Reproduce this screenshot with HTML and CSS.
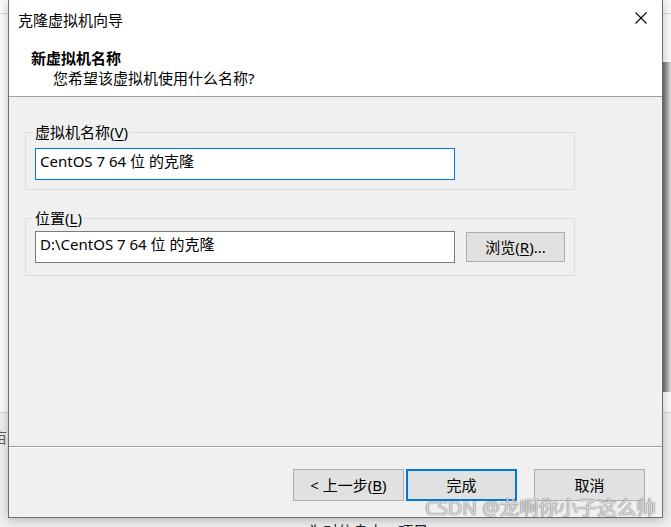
FILE: index.html
```html
<!DOCTYPE html>
<html lang="zh-CN">
<head>
<meta charset="utf-8">
<title>克隆虚拟机向导</title>
<link rel="stylesheet" href="styles.css">
</head>
<body>
<div class="desktop">
  <div class="bg-line bg-line-top"></div>
  <div class="bg-line bg-line-mid"></div>
  <div class="bg-shadow-right"></div>
  <span class="bg-char">亩</span>
  <div class="bg-text">一&nbsp;&nbsp;&nbsp;一&nbsp;&nbsp;&nbsp;为对信息中一项目</div>

  <div class="dialog">
    <div class="titlebar">
      <span class="title">克隆虚拟机向导</span>
      <svg class="close" width="12" height="12" viewBox="0 0 12 12"><path d="M0.5 0.5 L11.5 11.5 M11.5 0.5 L0.5 11.5" stroke="#000" stroke-width="1.1" fill="none"/></svg>
    </div>
    <div class="header">
      <div class="h-title">新虚拟机名称</div>
      <div class="h-sub">您希望该虚拟机使用什么名称?</div>
    </div>
    <div class="content">
      <div class="group group-name">
        <span class="group-label">虚拟机名称(<u>V</u>)</span>
        <div class="input input-focus">CentOS 7 64 位 的克隆</div>
      </div>
      <div class="group group-loc">
        <span class="group-label">位置(<u>L</u>)</span>
        <div class="row">
          <div class="input">D:\CentOS 7 64 位 的克隆</div>
          <div class="btn btn-browse">浏览(<u>R</u>)...</div>
        </div>
      </div>
    </div>
    <div class="footer">
      <div class="btn btn-back">&lt; 上一步(<u>B</u>)</div>
      <div class="btn btn-finish">完成</div>
      <div class="btn btn-cancel">取消</div>
    </div>
  </div>

  <div class="watermark">CSDN @龙啊你小子这么帅</div>
</div>
</body>
</html>
```
FILE: styles.css
```css
html, body {
  margin: 0;
  padding: 0;
}
body {
  width: 671px;
  height: 527px;
  overflow: hidden;
  background: #f7f7f7;
  font-family: "Noto Sans", "Noto Sans CJK SC", sans-serif;
  font-size: 15px;
  color: #000;
}
.desktop {
  position: relative;
  width: 671px;
  height: 527px;
  overflow: hidden;
  background: linear-gradient(to bottom, #fbfbfb 0, #fbfbfb 412px, #f0f0f0 413px);
}
.bg-line {
  position: absolute;
  left: 0;
  right: 0;
  height: 1px;
  background: #d9d9d9;
}
.bg-line-top { top: 13px; }
.bg-line-mid { top: 412px; }
.bg-shadow-right {
  position: absolute;
  left: 663px;
  top: 62px;
  width: 8px;
  height: 330px;
  background: linear-gradient(to right, #6a6a6a, #b0b0b0 60%, #dedede);
}
.bg-char {
  position: absolute;
  left: -8px;
  top: 427px;
  line-height: 20px;
  color: #6a5a4a;
  font-family: "Noto Sans CJK SC", sans-serif;
}
.bg-text {
  position: absolute;
  left: 258px;
  top: 521px;
  line-height: 20px;
  font-family: "Noto Sans CJK SC", sans-serif;
  color: #222;
}
.dialog {
  position: absolute;
  left: 8px;
  top: 0;
  width: 655px;
  height: 518px;
  box-sizing: border-box;
  border: 1px solid #6f6f6f;
  border-top: none;
  background: #f0f0f0;
  display: flex;
  flex-direction: column;
  box-shadow: 0 2px 10px rgba(0,0,0,0.25);
}
.titlebar {
  height: 40px;
  flex: none;
  background: #fff;
  display: flex;
  align-items: center;
  justify-content: space-between;
  padding: 0 15px 0 9px;
}
.title {
  line-height: 20px;
}
.close {
  display: block;
  margin-top: -4px;
}
.header {
  flex: none;
  background: #fff;
  padding: 8px 0 8px;
  border-bottom: 1px solid #a0a0a0;
}
.h-title {
  padding-left: 22px;
  line-height: 20px;
  font-weight: bold;
}
.h-sub {
  padding-left: 44px;
  line-height: 20px;
}
.content {
  flex: 1;
  display: flex;
  flex-direction: column;
}
.group {
  position: relative;
  margin-left: 16px;
  width: 550px;
  box-sizing: border-box;
  border: 1px solid #dcdcdc;
  padding-left: 9px;
}
.group-name {
  margin-top: 35px;
  padding-top: 15px;
  padding-bottom: 9px;
}
.group-loc {
  margin-top: 28px;
  padding-top: 12px;
  padding-bottom: 12px;
}
.group-label {
  position: absolute;
  left: 7px;
  top: -11px;
  padding: 0 2px;
  line-height: 20px;
  background: #f0f0f0;
}
u {
  text-decoration-thickness: 1px;
  text-underline-offset: 2px;
}
.row {
  display: flex;
  align-items: center;
}
.input {
  width: 420px;
  height: 32px;
  box-sizing: border-box;
  background: #fff;
  border: 1px solid #7a7a7a;
  padding-left: 4px;
  line-height: 24px;
  white-space: nowrap;
}
.input-focus {
  border-color: #0078d7;
}
.btn {
  box-sizing: border-box;
  width: 111px;
  height: 32px;
  background: #e1e1e1;
  border: 1px solid #adadad;
  display: flex;
  align-items: center;
  justify-content: center;
  line-height: 20px;
  white-space: nowrap;
}
.btn-browse {
  width: 99px;
  height: 30px;
  margin-left: 11px;
}
.footer {
  flex: none;
  height: 71px;
  box-sizing: border-box;
  border-top: 1px solid #a0a0a0;
  box-shadow: inset 0 1px 0 #fff;
  padding: 22px 17px 0 0;
  display: flex;
  justify-content: flex-end;
  align-items: flex-start;
}
.btn-finish {
  margin-left: 2px;
  border: 2px solid #0078d7;
}
.btn-cancel {
  margin-left: 17px;
}
.watermark {
  position: absolute;
  left: 425px;
  top: 496px;
  line-height: 24px;
  font-size: 19.5px;
  font-family: "Noto Sans", "Noto Sans CJK SC", sans-serif;
  color: rgba(250,250,250,0.8);
  text-shadow: 0 0 1px rgba(90,90,90,0.9), 0 0 1px rgba(90,90,90,0.8);
  white-space: nowrap;
}
```
